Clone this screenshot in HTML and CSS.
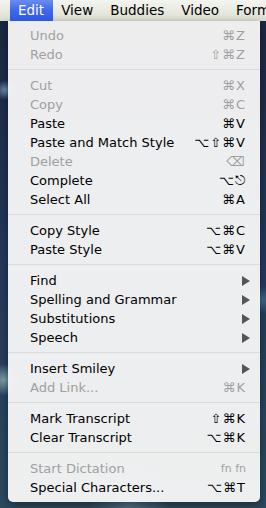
FILE: index.html
```html
<!DOCTYPE html>
<html lang="en">

<head>
    <meta charset="UTF-8">
    <title>Edit menu</title>
    <link rel="stylesheet" href="styles.css">
</head>

<body>
    <div class="menubar">
        <span class="title active">Edit</span>
        <span class="title">View</span>
        <span class="title">Buddies</span>
        <span class="title">Video</span>
        <span class="title">Format</span>
    </div>
    <div class="menu">
        <div class="item off"><span>Undo</span><span class="key">⌘Z</span></div>
        <div class="item off"><span>Redo</span><span class="key">⇧⌘Z</span></div>
        <div class="sep"></div>
        <div class="item off"><span>Cut</span><span class="key">⌘X</span></div>
        <div class="item off"><span>Copy</span><span class="key">⌘C</span></div>
        <div class="item"><span>Paste</span><span class="key">⌘V</span></div>
        <div class="item"><span>Paste and Match Style</span><span class="key">⌥⇧⌘V</span></div>
        <div class="item off"><span>Delete</span><span class="key">⌫</span></div>
        <div class="item"><span>Complete</span><span class="key">⌥⎋</span></div>
        <div class="item"><span>Select All</span><span class="key">⌘A</span></div>
        <div class="sep"></div>
        <div class="item"><span>Copy Style</span><span class="key">⌥⌘C</span></div>
        <div class="item"><span>Paste Style</span><span class="key">⌥⌘V</span></div>
        <div class="sep"></div>
        <div class="item sub"><span>Find</span><span class="arrow"></span></div>
        <div class="item sub"><span>Spelling and Grammar</span><span class="arrow"></span></div>
        <div class="item sub"><span>Substitutions</span><span class="arrow"></span></div>
        <div class="item sub"><span>Speech</span><span class="arrow"></span></div>
        <div class="sep"></div>
        <div class="item sub"><span>Insert Smiley</span><span class="arrow"></span></div>
        <div class="item off"><span>Add Link...</span><span class="key">⌘K</span></div>
        <div class="sep"></div>
        <div class="item"><span>Mark Transcript</span><span class="key">⇧⌘K</span></div>
        <div class="item"><span>Clear Transcript</span><span class="key">⌥⌘K</span></div>
        <div class="sep"></div>
        <div class="item off"><span>Start Dictation</span><span class="key small">fn fn</span></div>
        <div class="item"><span>Special Characters...</span><span class="key">⌥⌘T</span></div>
    </div>
</body>

</html>
```

FILE: styles.css
```css
* {
    margin: 0;
    padding: 0;
}

body {
    width: 266px;
    height: 508px;
    overflow: hidden;
    font-family: "DejaVu Sans", sans-serif;
    font-size: 13px;
    color: #000;
    background-color: #1d2b45;
    background-image:
        radial-gradient(circle at 5px 90px, #6c8ab0 0, transparent 10px),
        radial-gradient(circle at 262px 300px, #3f6a8a 0, transparent 14px),
        radial-gradient(circle at 4px 380px, #7fa0a8 0, transparent 16px),
        radial-gradient(circle at 130px 506px, #4d6f86 0, transparent 40px),
        linear-gradient(180deg, #1a2640 0%, #22385a 50%, #2b4a5e 100%);
}

.menubar {
    height: 21px;
    display: flex;
    align-items: stretch;
    padding-left: 10px;
    background: linear-gradient(180deg, #f4f4f0 0%, #e6e8de 60%, #d9dccf 100%);
    white-space: nowrap;
    overflow: hidden;
}

.title {
    padding: 0 9px 0 8px;
    line-height: 21px;
    font-size: 13.5px;
}

.title.active {
    color: #fff;
    background: linear-gradient(180deg, #6a8cf2 0%, #3f68ec 50%, #2d57e6 100%);
}

.menu {
    width: 252px;
    margin-left: 8px;
    padding: 5px 0 5px;
    background: rgba(246, 246, 246, 0.96);
    border-radius: 0 0 5px 5px;
    box-shadow: 0 3px 8px rgba(0, 0, 0, 0.4);
}

.item {
    height: 19px;
    display: flex;
    align-items: center;
    justify-content: space-between;
    padding: 0 14px 0 22px;
    white-space: nowrap;
}

.item.sub {
    padding-right: 10px;
}

.off {
    color: #a0a0a0;
}

.key {
    letter-spacing: 1px;
}

.small {
    font-size: 11px;
    letter-spacing: 0;
}

.arrow {
    width: 0;
    height: 0;
    border-top: 5px solid transparent;
    border-bottom: 5px solid transparent;
    border-left: 8px solid #555;
}

.sep {
    height: 1px;
    margin: 5px 0 6px;
    background-color: #dadada;
}
```
